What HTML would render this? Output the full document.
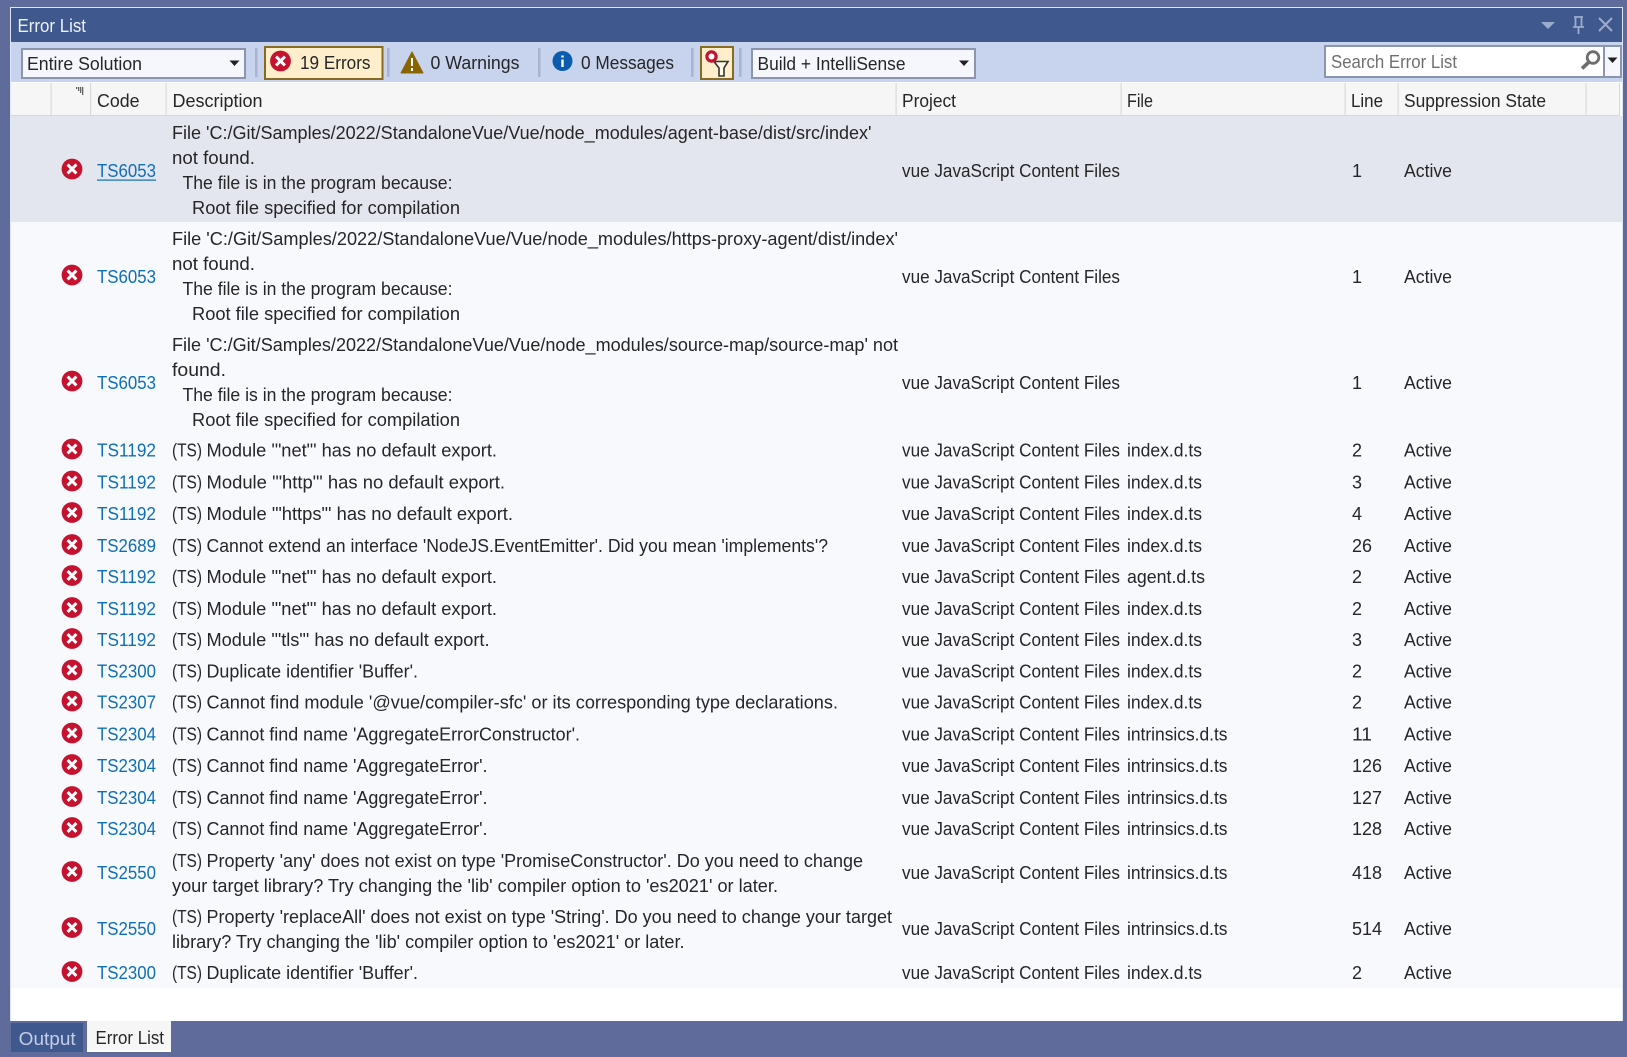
<!DOCTYPE html>
<html><head><meta charset="utf-8"><title>Error List</title>
<style>
html,body{margin:0;padding:0;background:#5f6b9a;overflow:hidden}
svg{display:block;font-family:"Liberation Sans",sans-serif;font-size:18px;fill:#262626}
.l{fill:#0f6fb5}
</style></head><body>
<svg width="1627" height="1057" viewBox="0 0 1627 1057" xmlns="http://www.w3.org/2000/svg">
<defs>
<g id="e"><circle r="10.4" fill="#c4122f"/><path d="M-4.400-4.400L4.400 4.400M4.400-4.400L-4.400 4.400" stroke="#fff" stroke-width="3" fill="none"/></g>
<path id="a" d="M-5-2.500H5L0 3Z" fill="#222"/>
</defs>
<rect width="1627" height="1057" fill="#5f6b9a"/>
<rect x="10" y="7" width="1613" height="1015" fill="#dfe6f5"/>
<rect x="11" y="8" width="1611" height="34" fill="#3f598e"/>
<rect x="11" y="42" width="1611" height="40" fill="#c8d4ee"/>
<rect x="11" y="82" width="1611" height="940" fill="#fff"/>
<rect x="11" y="83" width="1609" height="32" fill="#f6f6f6"/>
<rect x="11" y="115" width="1609" height="1.500" fill="#d6d7dc"/>
<rect x="11" y="116" width="1611" height="106" fill="#e4e6ef"/>
<rect x="11" y="222" width="1611" height="766" fill="#f8f9fd"/>

<text x="17.500" y="32" style="fill:#eef1f8" textLength="68.500" lengthAdjust="spacingAndGlyphs">Error List</text>
<path d="M1541 22H1555L1548 29Z" fill="#9dabcd"/>
<path d="M1574 17H1583M1575.500 17V27M1581.500 17V27M1573 27H1584M1578.500 27V34" stroke="#9dabcd" stroke-width="1.800" fill="none"/>
<path d="M1599 18L1612 31M1612 18L1599 31" stroke="#9dabcd" stroke-width="2" fill="none"/>

<rect x="22" y="49" width="223" height="29" fill="#f5f7fd" stroke="#8b95ad" stroke-width="2"/>
<text x="27" y="70" textLength="115" lengthAdjust="spacingAndGlyphs">Entire Solution</text>
<use href="#a" x="234.500" y="63"/>
<g fill="#a9b4d0"><rect x="255" y="48" width="2.500" height="29"/><rect x="387" y="48" width="2.500" height="29"/><rect x="538" y="48" width="2.500" height="29"/><rect x="691" y="48" width="2.500" height="29"/><rect x="739" y="48" width="2.500" height="29"/></g>
<rect x="265" y="47" width="117.500" height="32" fill="#feeecb" stroke="#8a6a1e" stroke-width="2"/>
<use href="#e" x="280.500" y="61"/>
<text x="300" y="69" textLength="70.500" lengthAdjust="spacingAndGlyphs">19 Errors</text>
<path d="M412 52L423 73H401Z" fill="#8a6400" stroke="#8a6400" stroke-width="1" stroke-linejoin="round"/>
<path d="M412 58V66M412 68V71" stroke="#fff" stroke-width="2" fill="none"/>
<text x="430.500" y="69" textLength="89" lengthAdjust="spacingAndGlyphs">0 Warnings</text>
<circle cx="562.500" cy="61" r="10" fill="#0b5cad"/>
<path d="M562.500 55.500V57.500M562.500 59.500V67" stroke="#fff" stroke-width="2.400" fill="none"/>
<text x="581" y="69" textLength="93" lengthAdjust="spacingAndGlyphs">0 Messages</text>
<rect x="701" y="47" width="32" height="32" fill="#feeecb" stroke="#8a6a1e" stroke-width="2"/>
<path d="M714 61.500H728L724 68V76H719V68Z" fill="#fff7e6" stroke="#333" stroke-width="1.600"/>
<circle cx="711.500" cy="56.500" r="4.600" fill="#fff" stroke="#c4122f" stroke-width="3.200"/>
<rect x="752" y="49" width="223" height="29" fill="#f5f7fd" stroke="#8b95ad" stroke-width="2"/>
<text x="757.500" y="70" textLength="148" lengthAdjust="spacingAndGlyphs">Build + IntelliSense</text>
<use href="#a" x="964" y="63"/>
<rect x="1325" y="46" width="296" height="31" fill="#fff" stroke="#8b95ad" stroke-width="2"/>
<rect x="1604" y="47" width="16" height="29" fill="#f5f7fd"/>
<rect x="1603" y="46" width="2" height="31" fill="#8b95ad"/>
<text x="1331" y="68" style="fill:#6f6f6f" textLength="126" lengthAdjust="spacingAndGlyphs">Search Error List</text>
<circle cx="1593" cy="57.500" r="5.800" fill="none" stroke="#6e6e6e" stroke-width="2.800"/>
<path d="M1589 62L1582 68.500" stroke="#6e6e6e" stroke-width="3.600" fill="none"/>
<use href="#a" x="1612.500" y="60"/>

<g fill="#d8d9dd"><rect x="50.500" y="83" width="1.200" height="32"/><rect x="90" y="83" width="1.200" height="32"/><rect x="165.500" y="83" width="1.200" height="32"/><rect x="895.500" y="83" width="1.200" height="32"/><rect x="1120.500" y="83" width="1.200" height="32"/><rect x="1344.500" y="83" width="1.200" height="32"/><rect x="1397.500" y="83" width="1.200" height="32"/><rect x="1585.500" y="83" width="1.200" height="32"/><rect x="1619" y="83" width="1.200" height="32"/></g>
<path d="M76 88H84M78 90H84M80 92H84M82 94H84" stroke="#333" stroke-width="1.500" stroke-dasharray="1.300 .7" fill="none"/>
<text x="97" y="107" textLength="42.500" lengthAdjust="spacingAndGlyphs">Code</text>
<text x="172.500" y="107" textLength="90" lengthAdjust="spacingAndGlyphs">Description</text>
<text x="902" y="107" textLength="54" lengthAdjust="spacingAndGlyphs">Project</text>
<text x="1127" y="107" textLength="26" lengthAdjust="spacingAndGlyphs">File</text>
<text x="1351" y="107" textLength="32" lengthAdjust="spacingAndGlyphs">Line</text>
<text x="1404" y="107" textLength="142" lengthAdjust="spacingAndGlyphs">Suppression State</text>

<use href="#e" x="72" y="169"/><use href="#e" x="72" y="275"/><use href="#e" x="72" y="381"/>
<text class="l" x="97" y="177" textLength="59" lengthAdjust="spacingAndGlyphs">TS6053</text>
<rect x="97" y="179.500" width="59" height="1.200" fill="#0f6fb5"/>
<text class="l" x="97" y="283" textLength="59" lengthAdjust="spacingAndGlyphs">TS6053</text>
<text class="l" x="97" y="389" textLength="59" lengthAdjust="spacingAndGlyphs">TS6053</text>
<text x="172" y="139" textLength="699.500" lengthAdjust="spacingAndGlyphs">File 'C:/Git/Samples/2022/StandaloneVue/Vue/node_modules/agent-base/dist/src/index'</text>
<text x="172" y="164" textLength="83" lengthAdjust="spacingAndGlyphs">not found.</text>
<text x="182.500" y="189" textLength="270" lengthAdjust="spacingAndGlyphs">The file is in the program because:</text>
<text x="192" y="214" textLength="268" lengthAdjust="spacingAndGlyphs">Root file specified for compilation</text>
<text x="172" y="245" textLength="726" lengthAdjust="spacingAndGlyphs">File 'C:/Git/Samples/2022/StandaloneVue/Vue/node_modules/https-proxy-agent/dist/index'</text>
<text x="172" y="270" textLength="83" lengthAdjust="spacingAndGlyphs">not found.</text>
<text x="182.500" y="295" textLength="270" lengthAdjust="spacingAndGlyphs">The file is in the program because:</text>
<text x="192" y="320" textLength="268" lengthAdjust="spacingAndGlyphs">Root file specified for compilation</text>
<text x="172" y="351" textLength="726" lengthAdjust="spacingAndGlyphs">File 'C:/Git/Samples/2022/StandaloneVue/Vue/node_modules/source-map/source-map' not</text>
<text x="172" y="376" textLength="54" lengthAdjust="spacingAndGlyphs">found.</text>
<text x="182.500" y="401" textLength="270" lengthAdjust="spacingAndGlyphs">The file is in the program because:</text>
<text x="192" y="426" textLength="268" lengthAdjust="spacingAndGlyphs">Root file specified for compilation</text>
<text x="902" y="177" textLength="218" lengthAdjust="spacingAndGlyphs">vue JavaScript Content Files</text>
<text x="902" y="283" textLength="218" lengthAdjust="spacingAndGlyphs">vue JavaScript Content Files</text>
<text x="902" y="389" textLength="218" lengthAdjust="spacingAndGlyphs">vue JavaScript Content Files</text>
<text x="1352" y="177">1</text><text x="1352" y="283">1</text><text x="1352" y="389">1</text>
<text x="1404" y="177" textLength="48" lengthAdjust="spacingAndGlyphs">Active</text>
<text x="1404" y="283" textLength="48" lengthAdjust="spacingAndGlyphs">Active</text>
<text x="1404" y="389" textLength="48" lengthAdjust="spacingAndGlyphs">Active</text>

<g transform="translate(0,456.500)"><use href="#e" x="72" y="-7.500"/><text class="l" x="97" textLength="59" lengthAdjust="spacingAndGlyphs">TS1192</text><text x="172" textLength="30" lengthAdjust="spacingAndGlyphs">(TS)</text><text x="206.500" textLength="290.500" lengthAdjust="spacingAndGlyphs">Module '"net"' has no default export.</text><text x="902" textLength="218" lengthAdjust="spacingAndGlyphs">vue JavaScript Content Files</text><text x="1127" textLength="75" lengthAdjust="spacingAndGlyphs">index.d.ts</text><text x="1352">2</text><text x="1404" textLength="48" lengthAdjust="spacingAndGlyphs">Active</text></g>
<g transform="translate(0,488.500)"><use href="#e" x="72" y="-7.500"/><text class="l" x="97" textLength="59" lengthAdjust="spacingAndGlyphs">TS1192</text><text x="172" textLength="30" lengthAdjust="spacingAndGlyphs">(TS)</text><text x="206.500" textLength="298.500" lengthAdjust="spacingAndGlyphs">Module '"http"' has no default export.</text><text x="902" textLength="218" lengthAdjust="spacingAndGlyphs">vue JavaScript Content Files</text><text x="1127" textLength="75" lengthAdjust="spacingAndGlyphs">index.d.ts</text><text x="1352">3</text><text x="1404" textLength="48" lengthAdjust="spacingAndGlyphs">Active</text></g>
<g transform="translate(0,520)"><use href="#e" x="72" y="-7.500"/><text class="l" x="97" textLength="59" lengthAdjust="spacingAndGlyphs">TS1192</text><text x="172" textLength="30" lengthAdjust="spacingAndGlyphs">(TS)</text><text x="206.500" textLength="306.500" lengthAdjust="spacingAndGlyphs">Module '"https"' has no default export.</text><text x="902" textLength="218" lengthAdjust="spacingAndGlyphs">vue JavaScript Content Files</text><text x="1127" textLength="75" lengthAdjust="spacingAndGlyphs">index.d.ts</text><text x="1352">4</text><text x="1404" textLength="48" lengthAdjust="spacingAndGlyphs">Active</text></g>
<g transform="translate(0,552)"><use href="#e" x="72" y="-7.500"/><text class="l" x="97" textLength="59" lengthAdjust="spacingAndGlyphs">TS2689</text><text x="172" textLength="30" lengthAdjust="spacingAndGlyphs">(TS)</text><text x="206.500" textLength="621.500" lengthAdjust="spacingAndGlyphs">Cannot extend an interface 'NodeJS.EventEmitter'. Did you mean 'implements'?</text><text x="902" textLength="218" lengthAdjust="spacingAndGlyphs">vue JavaScript Content Files</text><text x="1127" textLength="75" lengthAdjust="spacingAndGlyphs">index.d.ts</text><text x="1352" textLength="20" lengthAdjust="spacingAndGlyphs">26</text><text x="1404" textLength="48" lengthAdjust="spacingAndGlyphs">Active</text></g>
<g transform="translate(0,583)"><use href="#e" x="72" y="-7.500"/><text class="l" x="97" textLength="59" lengthAdjust="spacingAndGlyphs">TS1192</text><text x="172" textLength="30" lengthAdjust="spacingAndGlyphs">(TS)</text><text x="206.500" textLength="290.500" lengthAdjust="spacingAndGlyphs">Module '"net"' has no default export.</text><text x="902" textLength="218" lengthAdjust="spacingAndGlyphs">vue JavaScript Content Files</text><text x="1127" textLength="78" lengthAdjust="spacingAndGlyphs">agent.d.ts</text><text x="1352">2</text><text x="1404" textLength="48" lengthAdjust="spacingAndGlyphs">Active</text></g>
<g transform="translate(0,615)"><use href="#e" x="72" y="-7.500"/><text class="l" x="97" textLength="59" lengthAdjust="spacingAndGlyphs">TS1192</text><text x="172" textLength="30" lengthAdjust="spacingAndGlyphs">(TS)</text><text x="206.500" textLength="290.500" lengthAdjust="spacingAndGlyphs">Module '"net"' has no default export.</text><text x="902" textLength="218" lengthAdjust="spacingAndGlyphs">vue JavaScript Content Files</text><text x="1127" textLength="75" lengthAdjust="spacingAndGlyphs">index.d.ts</text><text x="1352">2</text><text x="1404" textLength="48" lengthAdjust="spacingAndGlyphs">Active</text></g>
<g transform="translate(0,646)"><use href="#e" x="72" y="-7.500"/><text class="l" x="97" textLength="59" lengthAdjust="spacingAndGlyphs">TS1192</text><text x="172" textLength="30" lengthAdjust="spacingAndGlyphs">(TS)</text><text x="206.500" textLength="283" lengthAdjust="spacingAndGlyphs">Module '"tls"' has no default export.</text><text x="902" textLength="218" lengthAdjust="spacingAndGlyphs">vue JavaScript Content Files</text><text x="1127" textLength="75" lengthAdjust="spacingAndGlyphs">index.d.ts</text><text x="1352">3</text><text x="1404" textLength="48" lengthAdjust="spacingAndGlyphs">Active</text></g>
<g transform="translate(0,677.500)"><use href="#e" x="72" y="-7.500"/><text class="l" x="97" textLength="59" lengthAdjust="spacingAndGlyphs">TS2300</text><text x="172" textLength="30" lengthAdjust="spacingAndGlyphs">(TS)</text><text x="206.500" textLength="211.500" lengthAdjust="spacingAndGlyphs">Duplicate identifier 'Buffer'.</text><text x="902" textLength="218" lengthAdjust="spacingAndGlyphs">vue JavaScript Content Files</text><text x="1127" textLength="75" lengthAdjust="spacingAndGlyphs">index.d.ts</text><text x="1352">2</text><text x="1404" textLength="48" lengthAdjust="spacingAndGlyphs">Active</text></g>
<g transform="translate(0,708.500)"><use href="#e" x="72" y="-7.500"/><text class="l" x="97" textLength="59" lengthAdjust="spacingAndGlyphs">TS2307</text><text x="172" textLength="30" lengthAdjust="spacingAndGlyphs">(TS)</text><text x="206.500" textLength="631.500" lengthAdjust="spacingAndGlyphs">Cannot find module '@vue/compiler-sfc' or its corresponding type declarations.</text><text x="902" textLength="218" lengthAdjust="spacingAndGlyphs">vue JavaScript Content Files</text><text x="1127" textLength="75" lengthAdjust="spacingAndGlyphs">index.d.ts</text><text x="1352">2</text><text x="1404" textLength="48" lengthAdjust="spacingAndGlyphs">Active</text></g>
<g transform="translate(0,740.500)"><use href="#e" x="72" y="-7.500"/><text class="l" x="97" textLength="59" lengthAdjust="spacingAndGlyphs">TS2304</text><text x="172" textLength="30" lengthAdjust="spacingAndGlyphs">(TS)</text><text x="206.500" textLength="373.500" lengthAdjust="spacingAndGlyphs">Cannot find name 'AggregateErrorConstructor'.</text><text x="902" textLength="218" lengthAdjust="spacingAndGlyphs">vue JavaScript Content Files</text><text x="1127" textLength="100.500" lengthAdjust="spacingAndGlyphs">intrinsics.d.ts</text><text x="1352" textLength="20" lengthAdjust="spacingAndGlyphs">11</text><text x="1404" textLength="48" lengthAdjust="spacingAndGlyphs">Active</text></g>
<g transform="translate(0,772)"><use href="#e" x="72" y="-7.500"/><text class="l" x="97" textLength="59" lengthAdjust="spacingAndGlyphs">TS2304</text><text x="172" textLength="30" lengthAdjust="spacingAndGlyphs">(TS)</text><text x="206.500" textLength="281" lengthAdjust="spacingAndGlyphs">Cannot find name 'AggregateError'.</text><text x="902" textLength="218" lengthAdjust="spacingAndGlyphs">vue JavaScript Content Files</text><text x="1127" textLength="100.500" lengthAdjust="spacingAndGlyphs">intrinsics.d.ts</text><text x="1352" textLength="30" lengthAdjust="spacingAndGlyphs">126</text><text x="1404" textLength="48" lengthAdjust="spacingAndGlyphs">Active</text></g>
<g transform="translate(0,804)"><use href="#e" x="72" y="-7.500"/><text class="l" x="97" textLength="59" lengthAdjust="spacingAndGlyphs">TS2304</text><text x="172" textLength="30" lengthAdjust="spacingAndGlyphs">(TS)</text><text x="206.500" textLength="281" lengthAdjust="spacingAndGlyphs">Cannot find name 'AggregateError'.</text><text x="902" textLength="218" lengthAdjust="spacingAndGlyphs">vue JavaScript Content Files</text><text x="1127" textLength="100.500" lengthAdjust="spacingAndGlyphs">intrinsics.d.ts</text><text x="1352" textLength="30" lengthAdjust="spacingAndGlyphs">127</text><text x="1404" textLength="48" lengthAdjust="spacingAndGlyphs">Active</text></g>
<g transform="translate(0,835)"><use href="#e" x="72" y="-7.500"/><text class="l" x="97" textLength="59" lengthAdjust="spacingAndGlyphs">TS2304</text><text x="172" textLength="30" lengthAdjust="spacingAndGlyphs">(TS)</text><text x="206.500" textLength="281" lengthAdjust="spacingAndGlyphs">Cannot find name 'AggregateError'.</text><text x="902" textLength="218" lengthAdjust="spacingAndGlyphs">vue JavaScript Content Files</text><text x="1127" textLength="100.500" lengthAdjust="spacingAndGlyphs">intrinsics.d.ts</text><text x="1352" textLength="30" lengthAdjust="spacingAndGlyphs">128</text><text x="1404" textLength="48" lengthAdjust="spacingAndGlyphs">Active</text></g>
<g transform="translate(0,879)"><use href="#e" x="72" y="-7.500"/><text class="l" x="97" textLength="59" lengthAdjust="spacingAndGlyphs">TS2550</text><text x="172" y="-12" textLength="30" lengthAdjust="spacingAndGlyphs">(TS)</text><text x="206.500" y="-12" textLength="656.500" lengthAdjust="spacingAndGlyphs">Property 'any' does not exist on type 'PromiseConstructor'. Do you need to change</text><text x="172" y="13" textLength="606" lengthAdjust="spacingAndGlyphs">your target library? Try changing the 'lib' compiler option to 'es2021' or later.</text><text x="902" textLength="218" lengthAdjust="spacingAndGlyphs">vue JavaScript Content Files</text><text x="1127" textLength="100.500" lengthAdjust="spacingAndGlyphs">intrinsics.d.ts</text><text x="1352" textLength="30" lengthAdjust="spacingAndGlyphs">418</text><text x="1404" textLength="48" lengthAdjust="spacingAndGlyphs">Active</text></g>
<g transform="translate(0,935)"><use href="#e" x="72" y="-7.500"/><text class="l" x="97" textLength="59" lengthAdjust="spacingAndGlyphs">TS2550</text><text x="172" y="-12" textLength="30" lengthAdjust="spacingAndGlyphs">(TS)</text><text x="206.500" y="-12" textLength="685.500" lengthAdjust="spacingAndGlyphs">Property 'replaceAll' does not exist on type 'String'. Do you need to change your target</text><text x="172" y="13" textLength="512.500" lengthAdjust="spacingAndGlyphs">library? Try changing the 'lib' compiler option to 'es2021' or later.</text><text x="902" textLength="218" lengthAdjust="spacingAndGlyphs">vue JavaScript Content Files</text><text x="1127" textLength="100.500" lengthAdjust="spacingAndGlyphs">intrinsics.d.ts</text><text x="1352" textLength="30" lengthAdjust="spacingAndGlyphs">514</text><text x="1404" textLength="48" lengthAdjust="spacingAndGlyphs">Active</text></g>
<g transform="translate(0,979)"><use href="#e" x="72" y="-7.500"/><text class="l" x="97" textLength="59" lengthAdjust="spacingAndGlyphs">TS2300</text><text x="172" textLength="30" lengthAdjust="spacingAndGlyphs">(TS)</text><text x="206.500" textLength="211.500" lengthAdjust="spacingAndGlyphs">Duplicate identifier 'Buffer'.</text><text x="902" textLength="218" lengthAdjust="spacingAndGlyphs">vue JavaScript Content Files</text><text x="1127" textLength="75" lengthAdjust="spacingAndGlyphs">index.d.ts</text><text x="1352">2</text><text x="1404" textLength="48" lengthAdjust="spacingAndGlyphs">Active</text></g>

<rect x="0" y="1021" width="1627" height="36" fill="#5f6b9a"/>
<rect x="11" y="1023" width="72" height="29" fill="#3f598e"/>
<text x="18.700" y="1045" style="fill:#c4cde6" textLength="57" lengthAdjust="spacingAndGlyphs">Output</text>
<rect x="87" y="1021" width="84" height="29" fill="#f6f6f6"/>
<rect x="87" y="1050" width="84" height="2" fill="#fff"/>
<text x="95.500" y="1044" textLength="68.500" lengthAdjust="spacingAndGlyphs">Error List</text>
</svg>
</body></html>
